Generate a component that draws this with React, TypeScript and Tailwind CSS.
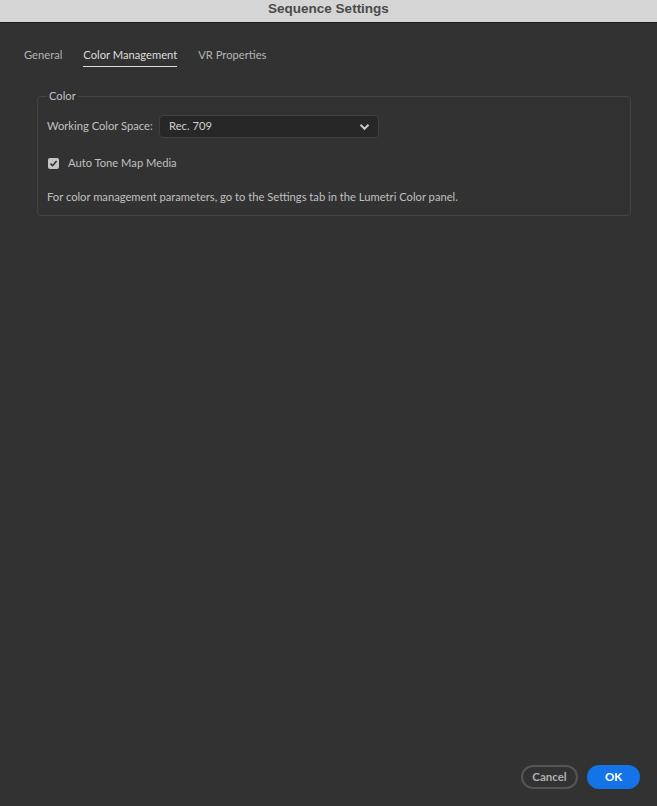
import React from "react";

export default function App() {
  const font = { fontFamily: 'Lato, "Open Sans", sans-serif' };
  return (
    <div className="w-[657px] h-[806px] bg-[#323232] flex flex-col overflow-hidden" style={font}>
      <div className="h-[23px] shrink-0 bg-[#d5d5d5] border-b border-[#161616] flex justify-center pt-[1px]">
        <span className="text-[13.5px] font-bold text-[#4a4a4a] leading-[15px]" style={{ fontFamily: '"Liberation Sans", Arial, sans-serif' }}>
          Sequence Settings
        </span>
      </div>
      <div className="flex gap-[21px] pl-[24px] pt-[24px] text-[11.2px] leading-[16px]">
        <span className="text-[#b4b4b4]">General</span>
        <span className="text-[#dcdcdc] border-b border-[#dcdcdc] pb-[3px]">Color Management</span>
        <span className="text-[#b4b4b4]">VR Properties</span>
      </div>
      <fieldset className="mx-[37px] mr-[26px] mt-[22px] border border-[#444444] rounded-[4px] pl-[9px] pr-3 pb-[9px] pt-0">
        <legend className="px-[2px] text-[11.2px] text-[#c0c0c0] leading-[14px]">Color</legend>
        <div className="flex items-center mt-[12px]">
          <span className="text-[11.2px] text-[#c0c0c0] w-[112px]">Working Color Space:</span>
          <div className="w-[220px] h-[23px] bg-[#272727] border border-[#404040] rounded-[4px] flex items-center justify-between pl-[9px] pr-[8px]">
            <span className="text-[11.2px] text-[#d0d0d0]">Rec. 709</span>
            <svg width="11" height="8" viewBox="0 0 11 8">
              <path d="M1.5 1.8 L5.5 5.8 L9.5 1.8" stroke="#c8c8c8" strokeWidth="2" fill="none" />
            </svg>
          </div>
        </div>
        <div className="flex items-center mt-[17px]">
          <div className="w-[11px] h-[11px] rounded-[2px] bg-[#c4c4c4] flex items-center justify-center ml-[1px]">
            <svg width="9" height="9" viewBox="0 0 9 9">
              <path d="M1.5 4.6 L3.6 6.7 L7.6 2" stroke="#2e2e2e" strokeWidth="1.5" fill="none" />
            </svg>
          </div>
          <span className="ml-[9px] text-[11.2px] text-[#c0c0c0]">Auto Tone Map Media</span>
        </div>
        <div className="mt-[17px] text-[11.2px] text-[#c0c0c0]">
          For color management parameters, go to the Settings tab in the Lumetri Color panel.
        </div>
      </fieldset>
      <div className="flex-1" />
      <div className="flex justify-end gap-[9px] pr-[17px] pb-[17px]">
        <button className="w-[57px] h-[24px] rounded-full border-2 border-[#555555] text-[11.5px] font-bold text-[#b0b0b0] flex items-center justify-center">
          Cancel
        </button>
        <button className="w-[53px] h-[24px] rounded-full bg-[#1473e6] text-[11.5px] font-bold text-white flex items-center justify-center">
          OK
        </button>
      </div>
    </div>
  );
}
